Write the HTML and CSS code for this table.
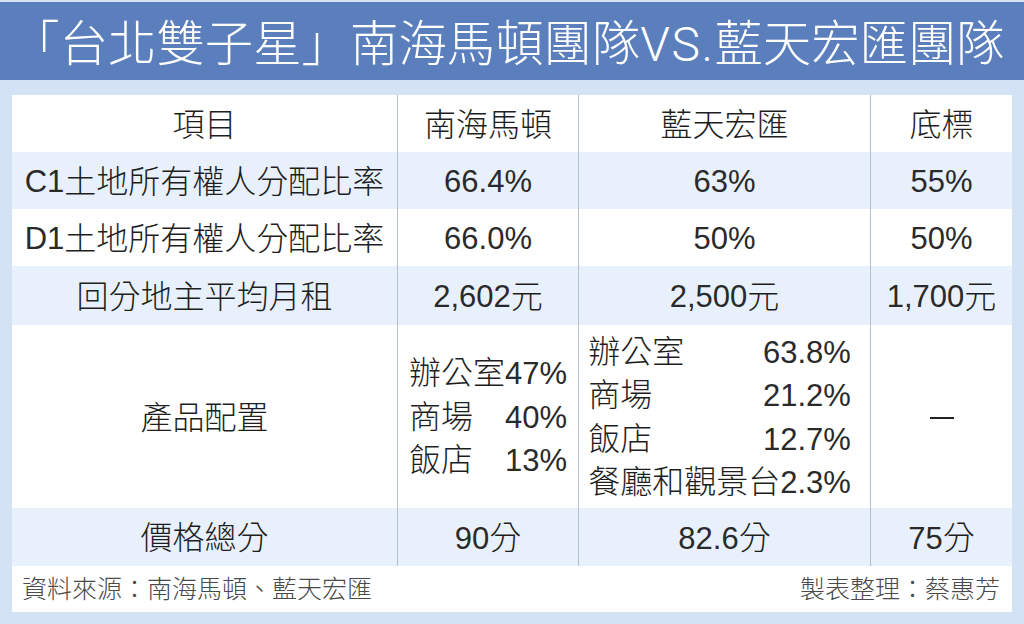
FILE: index.html
```html
<!DOCTYPE html>
<html lang="zh-Hant">
<head>
<meta charset="utf-8">
<title>台北雙子星</title>
<link rel="stylesheet" href="styles.css">
</head>
<body>
<div class="page">
  <header class="title-bar">
    <h1 class="title">「台北雙子星」南海馬頓團隊<span class="vs">VS.</span>藍天宏匯團隊</h1>
  </header>
  <main class="panel">
    <div class="grid">
      <div class="cell hd">項目</div>
      <div class="cell hd sep">南海馬頓</div>
      <div class="cell hd sep">藍天宏匯</div>
      <div class="cell hd sep">底標</div>

      <div class="cell alt"><span class="n">C1</span>土地所有權人分配比率</div>
      <div class="cell alt sep"><span class="n">66.4%</span></div>
      <div class="cell alt sep"><span class="n">63%</span></div>
      <div class="cell alt sep"><span class="n">55%</span></div>

      <div class="cell"><span class="n">D1</span>土地所有權人分配比率</div>
      <div class="cell sep"><span class="n">66.0%</span></div>
      <div class="cell sep"><span class="n">50%</span></div>
      <div class="cell sep"><span class="n">50%</span></div>

      <div class="cell alt">回分地主平均月租</div>
      <div class="cell alt sep"><span class="n">2,602</span>元</div>
      <div class="cell alt sep"><span class="n">2,500</span>元</div>
      <div class="cell alt sep"><span class="n">1,700</span>元</div>

      <div class="cell">產品配置</div>
      <div class="cell sep">
        <div class="mix">
          <div class="mix-row"><span>辦公室</span><span class="n">47%</span></div>
          <div class="mix-row"><span>商場</span><span class="n">40%</span></div>
          <div class="mix-row"><span>飯店</span><span class="n">13%</span></div>
        </div>
      </div>
      <div class="cell sep mix-wide">
        <div class="mix">
          <div class="mix-row"><span>辦公室</span><span class="n">63.8%</span></div>
          <div class="mix-row"><span>商場</span><span class="n">21.2%</span></div>
          <div class="mix-row"><span>飯店</span><span class="n">12.7%</span></div>
          <div class="mix-row"><span>餐廳和觀景台</span><span class="n">2.3%</span></div>
        </div>
      </div>
      <div class="cell sep"><span class="dash"></span></div>

      <div class="cell alt">價格總分</div>
      <div class="cell alt sep"><span class="n">90</span>分</div>
      <div class="cell alt sep"><span class="n">82.6</span>分</div>
      <div class="cell alt sep"><span class="n">75</span>分</div>
    </div>
    <footer class="foot">
      <span>資料來源：南海馬頓、藍天宏匯</span>
      <span>製表整理：蔡惠芳</span>
    </footer>
  </main>
</div>
</body>
</html>
```

FILE: styles.css
```css
html, body {
  margin: 0;
  padding: 0;
}
body {
  background: #d3e3f5;
  font-family: "Liberation Sans", "Noto Sans CJK TC", sans-serif;
  color: #1e1e1e;
  width: 1024px;
  height: 624px;
  overflow: hidden;
}
.page {
  display: flex;
  flex-direction: column;
  padding-top: 2px;
  background: #d3e3f5;
  height: 622px;
}
.title-bar {
  background: #5b7fbd;
  height: 78px;
  display: flex;
  align-items: center;
  justify-content: center;
  padding-right: 8px;
}
.title {
  margin: 0;
  padding-top: 6px;
  font-size: 48.4px;
  font-weight: 300;
  color: #ffffff;
  white-space: nowrap;
  line-height: 1;
}
.vs {
  font-family: Roboto, "Liberation Sans", sans-serif;
  font-size: 48px;
  font-weight: 300;
  letter-spacing: 1.5px;
}
.panel {
  margin: 15px 12px 0 12px;
  background: #ffffff;
  width: 1000px;
  height: 517px;
  display: flex;
  flex-direction: column;
}
.grid {
  display: grid;
  grid-template-columns: 385px 181px 292px 142px;
  grid-template-rows: 57px 57px 57px 59px 183px 58px;
}
.cell {
  display: flex;
  align-items: center;
  justify-content: center;
  font-size: 32px;
  font-weight: 300;
  line-height: 1;
  white-space: nowrap;
  background: #ffffff;
  padding-top: 2px;
}
.n {
  font-size: 31px;
  font-weight: 400;
  color: #2a2a2a;
}
.cell.alt {
  background: #e8f1fb;
}
.cell.sep {
  border-left: 1px solid #b4bfcc;
}
.cell.mix-wide {
  padding-right: 10px;
}
.mix {
  display: flex;
  flex-direction: column;
}
.mix-row {
  display: flex;
  justify-content: space-between;
  align-items: baseline;
  line-height: 42.5px;
}
.dash {
  display: block;
  width: 24px;
  height: 2px;
  background: #222;
}
.foot {
  flex: 1;
  display: flex;
  justify-content: space-between;
  align-items: center;
  padding: 0 12px 4px 10px;
  font-size: 25px;
  font-weight: 300;
  color: #4a4a4a;
}
```
